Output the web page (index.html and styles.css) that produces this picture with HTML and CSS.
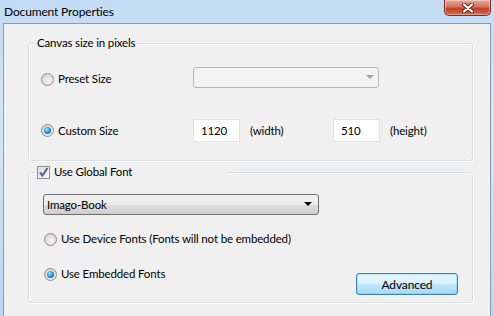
FILE: index.html
```html
<!DOCTYPE html>
<html lang="en">
<head>
  <meta charset="UTF-8">
  <title>Document Properties</title>
  <link rel="stylesheet" href="styles.css">
</head>
<body>

  <div class="window">
    <div class="titlebar">
      <span class="title">Document Properties</span>
      <div class="close">
        <svg width="14" height="10" viewBox="0 0 14 10">
          <path d="M3 1.5 L11 8.5 M11 1.5 L3 8.5" stroke="#5a2318" stroke-width="4" stroke-linecap="round"/>
          <path d="M3 1.5 L11 8.5 M11 1.5 L3 8.5" stroke="#fff" stroke-width="2.2" stroke-linecap="round"/>
        </svg>
      </div>
    </div>

    <div class="client">
      <div class="group group-canvas">
        <span class="legend legend-text">Canvas size in pixels</span>

        <div class="row row-preset">
          <label class="option"><span class="radio"></span>Preset Size</label>
          <div class="combo disabled"><span class="arrow gray"></span></div>
        </div>

        <div class="row row-custom">
          <label class="option"><span class="radio checked"></span>Custom Size</label>
          <div class="textbox">1120</div>
          <span class="unit unit-width">(width)</span>
          <div class="textbox">510</div>
          <span class="unit">(height)</span>
        </div>
      </div>

      <div class="group group-font">
        <label class="legend legend-check">
          <span class="checkbox">
            <svg width="11" height="11" viewBox="0 0 11 11">
              <path d="M2 5.5 L4.5 8.5 L9.5 1" fill="none" stroke="#4b61a0" stroke-width="2"/>
            </svg>
          </span>
          Use Global Font
        </label>

        <div class="combo font-combo">Imago-Book<span class="arrow"></span></div>

        <label class="option font-option device"><span class="radio"></span>Use Device Fonts (Fonts will not be embedded)</label>

        <div class="last-row">
          <label class="option font-option"><span class="radio checked"></span>Use Embedded Fonts</label>
          <button class="button">Advanced</button>
        </div>
      </div>
    </div>
  </div>

</body>
</html>
```

FILE: styles.css
```css
body {
  margin: 0;
  font-family: 'Lato', 'Noto Sans', sans-serif;
  font-size: 11.5px;
  letter-spacing: -0.15px;
  color: #000;
}

.window {
  width: 494px;
  height: 316px;
  background: linear-gradient(to bottom, #c3dbf4, #d2e5f8 40%, #bcd6f1);
  overflow: hidden;
}

.titlebar {
  height: 23px;
  display: flex;
  align-items: flex-start;
  justify-content: space-between;
}

.title {
  padding: 3px 0 0 4px;
  line-height: 17px;
  font-size: 12px;
}

.close {
  width: 45px;
  height: 15px;
  margin-right: 3px;
  border: 1px solid #7a2f22;
  border-top: none;
  border-radius: 0 0 5px 5px;
  background: linear-gradient(to bottom, #e9a597, #d5725f 45%, #c0402b 55%, #d66a4e);
  display: flex;
  justify-content: center;
  align-items: center;
  box-shadow: inset 0 0 0 1px rgba(255, 255, 255, 0.35);
}

.client {
  margin-left: 3px;
  width: 488px;
  height: 300px;
  border: 1px solid #8b9cae;
  border-bottom: none;
  background: #f0f0f0;
  padding: 19px 0 0 24px;
  box-sizing: border-box;
}

.group {
  position: relative;
  width: 445px;
  box-sizing: border-box;
  border: 1px solid #d5dfe5;
  border-radius: 3px;
  box-shadow: inset 1px 1px 0 #fff, 1px 1px 0 #fff;
}

.legend {
  position: absolute;
  top: -9px;
  background: #f0f0f0;
  line-height: 16px;
}

.legend-text {
  left: 6px;
  padding: 0 2px;
}

.legend-check {
  left: 7px;
  width: 190px;
  display: flex;
  align-items: center;
  gap: 4px;
  padding-left: 1px;
}

.group-canvas {
  height: 118px;
  padding: 23px 0 0 12px;
}

.row {
  display: flex;
  align-items: center;
}

.row-preset .option {
  margin-top: 3px;
}

.row-custom {
  margin-top: 31px;
}

.option {
  display: flex;
  align-items: center;
  gap: 4px;
  line-height: 16px;
}

.row .option {
  width: 152px;
}

.radio {
  position: relative;
  width: 11px;
  height: 11px;
  border: 1px solid #8d8d8d;
  border-radius: 50%;
  background: radial-gradient(circle at 60% 65%, #f4f4f4, #d8d8d8 70%, #c8c8c8);
  flex-shrink: 0;
}

.radio.checked::after {
  content: '';
  position: absolute;
  left: 2px;
  top: 2px;
  width: 7px;
  height: 7px;
  border-radius: 50%;
  background: radial-gradient(circle at 40% 35%, #b6ecff, #2a9be0 45%, #0b4f8c);
}

.checkbox {
  width: 11px;
  height: 11px;
  border: 1px solid #8e8f8f;
  background: linear-gradient(135deg, #dcdcdc, #fbfbfb);
  display: flex;
  flex-shrink: 0;
}

.combo {
  position: relative;
  box-sizing: border-box;
  height: 21px;
  border-radius: 3px;
}

.combo.disabled {
  width: 186px;
  border: 1px solid #b5b8bb;
  background: #f3f3f3;
}

.arrow {
  position: absolute;
  right: 6px;
  top: 7px;
  border-left: 4px solid transparent;
  border-right: 4px solid transparent;
  border-top: 4px solid #000;
}

.arrow.gray {
  border-top-color: #a2a2a2;
  right: 4px;
}

.textbox {
  box-sizing: border-box;
  width: 47px;
  height: 23px;
  border: 1px solid #dde3e9;
  background: #fff;
  padding: 3px 0 0 7px;
  line-height: 16px;
}

.unit {
  margin-left: 10px;
}

.unit-width {
  width: 83px;
}

.group-font {
  height: 131px;
  margin-top: 11px;
  padding: 21px 14px 0 14px;
}

.font-combo {
  width: 276px;
  border: 1px solid #707070;
  background: linear-gradient(to bottom, #f2f2f2, #ebebeb 50%, #dddddd 51%, #cfcfcf);
  padding-left: 3px;
  line-height: 19px;
}

.font-option {
  margin-left: 1px;
}

.device {
  margin-top: 16px;
}

.last-row {
  display: flex;
  justify-content: space-between;
  align-items: flex-start;
  margin-top: 19px;
}

.button {
  width: 102px;
  height: 22px;
  margin-top: 7px;
  font-family: inherit;
  font-size: 12px;
  letter-spacing: inherit;
  color: #000;
  border: 1px solid #3c7fb1;
  border-radius: 3px;
  background: linear-gradient(to bottom, #eaf6fd, #d9f0fc 50%, #bee6fd 51%, #a7d9f5);
  box-shadow: inset 0 0 0 1px #48d0fb55;
  padding: 0;
}
```
